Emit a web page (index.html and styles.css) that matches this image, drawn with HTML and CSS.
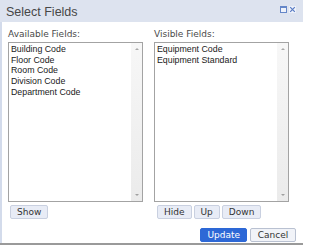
FILE: index.html
```html
<!DOCTYPE html>
<html>
<head>
<meta charset="utf-8">
<link rel="stylesheet" href="styles.css">
</head>
<body>
<div class="dialog">
  <div class="titlebar">
    <span class="title">Select Fields</span>
    <span class="tools">
      <svg class="tool" width="7" height="7" viewBox="0 0 7 7"><rect x="0.5" y="0.5" width="6" height="6" fill="#eef2fa" stroke="#6486c8"/><rect x="0" y="0" width="7" height="2" fill="#6486c8"/></svg>
      <svg class="tool" width="7" height="7" viewBox="0 0 7 7"><rect x="0" y="0" width="7" height="7" fill="#eef2fa"/><path d="M1.2 1.2 L5.8 5.8 M5.8 1.2 L1.2 5.8" stroke="#5a7cc4" stroke-width="1.2"/></svg>
    </span>
  </div>
  <div class="content">
    <div class="columns">
      <div class="column">
        <div class="label">Available Fields:</div>
        <div class="listbox">
          <div class="items">
            <div class="item">Building Code</div>
            <div class="item">Floor Code</div>
            <div class="item">Room Code</div>
            <div class="item">Division Code</div>
            <div class="item">Department Code</div>
          </div>
          <div class="scrollbar"><span class="arrow up"></span><span class="arrow down"></span></div>
        </div>
        <div class="btnrow">
          <button class="btn">Show</button>
        </div>
      </div>
      <div class="column">
        <div class="label">Visible Fields:</div>
        <div class="listbox">
          <div class="items">
            <div class="item">Equipment Code</div>
            <div class="item">Equipment Standard</div>
          </div>
          <div class="scrollbar"><span class="arrow up"></span><span class="arrow down"></span></div>
        </div>
        <div class="btnrow">
          <button class="btn">Hide</button>
          <button class="btn">Up</button>
          <button class="btn">Down</button>
        </div>
      </div>
    </div>
    <div class="footer">
      <button class="btn primary">Update</button>
      <button class="btn">Cancel</button>
    </div>
  </div>
</div>
</body>
</html>
```

FILE: styles.css
```css
html, body {
  margin: 0;
  padding: 0;
  background: #ffffff;
}

.dialog {
  width: 303px;
  height: 245px;
  box-sizing: border-box;
  background: #ffffff;
  border-bottom: 2px solid #9a9a9a;
  display: flex;
  flex-direction: column;
}

.titlebar {
  height: 22px;
  flex: 0 0 22px;
  background: #dde3ef;
  display: flex;
  align-items: center;
  justify-content: space-between;
  padding: 0 7px 0 6px;
}

.title {
  font-family: "Liberation Sans", Arial, sans-serif;
  font-size: 12.5px;
  color: #474747;
  margin-top: 1px;
}

.tools {
  display: flex;
  gap: 2px;
  margin-top: -3px;
}

.tool {
  display: block;
}

.content {
  flex: 1;
  border-left: 2px solid #d3dbeb;
  padding: 7px 0 0 6px;
  display: flex;
  flex-direction: column;
}

.columns {
  display: flex;
  gap: 11px;
}

.column {
  width: 135px;
  display: flex;
  flex-direction: column;
}

.label {
  font-family: "DejaVu Sans", Verdana, sans-serif;
  font-size: 9px;
  line-height: 11px;
  color: #4a4a4a;
  margin-bottom: 2px;
}

.listbox {
  height: 160px;
  box-sizing: border-box;
  border: 1px solid #a3a3a3;
  display: flex;
  background: #ffffff;
}

.items {
  flex: 1;
  padding: 0 0 0 2px;
}

.item {
  font-family: "Liberation Sans", Arial, sans-serif;
  font-size: 8.8px;
  line-height: 10.67px;
  color: #1a1a1a;
  white-space: nowrap;
}

.item:first-child {
  margin-top: 1px;
}

.scrollbar {
  width: 11px;
  background: linear-gradient(to bottom, #f7f7f7, #ebebeb);
  display: flex;
  flex-direction: column;
  justify-content: space-between;
  align-items: center;
  padding: 5px 0;
}

.arrow {
  width: 0;
  height: 0;
  border-left: 2.5px solid transparent;
  border-right: 2.5px solid transparent;
}

.arrow.up {
  border-bottom: 2.5px solid #a8a8a8;
}

.arrow.down {
  border-top: 2.5px solid #a0a0a0;
}

.btnrow {
  display: flex;
  gap: 2px;
  margin-top: 3px;
  padding-left: 2px;
}

.column + .column .btnrow {
  padding-left: 3px;
}

.btn {
  height: 14px;
  box-sizing: border-box;
  padding: 0 6px;
  margin: 0;
  font-family: "DejaVu Sans", Verdana, sans-serif;
  font-size: 9px;
  line-height: 12px;
  color: #333333;
  background: #e8ecf6;
  border: 1px solid #c9d0e0;
  border-radius: 2px;
}

.footer {
  display: flex;
  justify-content: flex-end;
  gap: 3px;
  margin-top: 9px;
  padding-right: 7px;
}

.footer .btn {
  min-width: 46px;
  height: 14px;
}

.btn.primary {
  background: #2d68d6;
  border-color: #2d68d6;
  color: #ffffff;
}

.footer .btn:not(.primary) {
  background: #f1f3f8;
  border-color: #b9c1d1;
}
```
